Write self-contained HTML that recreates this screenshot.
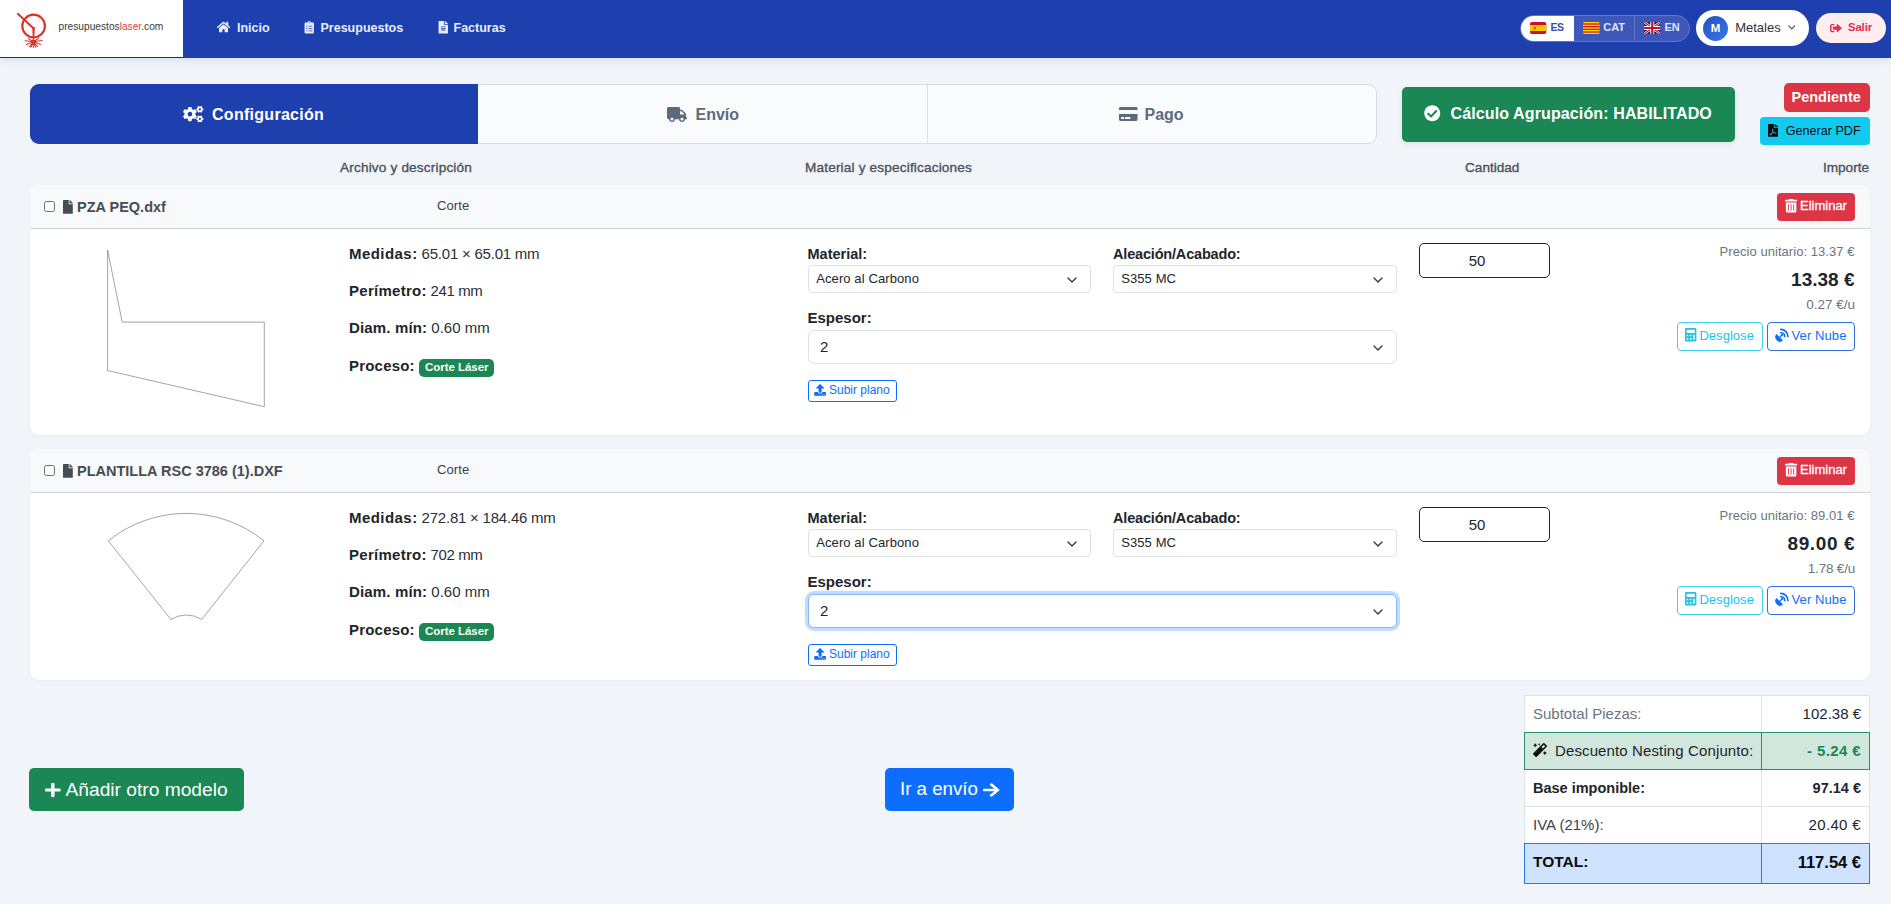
<!DOCTYPE html>
<html lang="es">
<head>
<meta charset="utf-8">
<title>Presupuestos Láser - Configuración</title>
<style>
*{box-sizing:border-box;margin:0;padding:0}
html,body{width:1891px;height:904px;overflow:hidden}
body{position:relative;background:#f1f5f9;font-family:"Liberation Sans",Arial,sans-serif;color:#212529;font-size:14px}
.a{position:absolute}
.t{position:absolute;white-space:nowrap;line-height:1}
.b{font-weight:700}
svg{position:absolute;display:block;overflow:visible}

/* header */
#hdr{left:0;top:0;width:1891px;height:57.500px;background:#1e40af;box-shadow:0 2px 8px rgba(30,64,175,.13)}
#logo{left:0;top:0;width:183px;height:57.5px;background:#fff;border-bottom:1px solid #1b2f78}
.nav{color:#e8edff;font-weight:700;font-size:12.5px;top:22px}

/* lang */
#lang{left:1520px;top:15px;width:169.500px;height:27px;border-radius:13.500px;background:#3e58ba;border:1px solid #5f76c8;overflow:hidden}
#lang .es{left:-1px;top:-1px;width:54px;height:27px;background:#fff;border-radius:13px 0 0 13px}
#lang .sep{left:113px;top:0;width:1px;height:24px;background:#5f76c8}
.lg{font-weight:700;font-size:11px;top:22px}

#user{left:1696px;top:10px;width:113px;height:35.500px;border-radius:18px;background:#fff}
#av{left:1703px;top:16px;width:25px;height:25px;border-radius:12.500px;background:linear-gradient(135deg,#2350c2,#3877ee)}
#salir{left:1816px;top:13px;width:70px;height:30px;border-radius:15px;background:#ffeef0}

/* tabs */
#tabs{left:30px;top:84px;width:1347px;height:60px;border-radius:9px;background:#fafbfd;border:1px solid #d8dde5;overflow:hidden}
#tab1{left:30px;top:84px;width:447.800px;height:60px;background:#1e40af;border-radius:9px 0 0 9px}
#tsep{left:896px;top:0;width:1px;height:58px;background:#dde2ea}
.tab{font-weight:700;font-size:16px;top:106.600px}

#grp{left:1402px;top:87px;width:333px;height:55px;border-radius:5px;background:#1a8754;box-shadow:0 2px 6px rgba(0,0,0,.08)}
#pend{left:1784px;top:83px;width:86px;height:28.700px;border-radius:5px;background:#dc3545}
#pdf{left:1760px;top:117px;width:110px;height:28px;border-radius:4px;background:#12caf0}

.col{font-size:13.600px;color:#4b5260;top:160.500px;font-weight:400;-webkit-text-stroke:.35px #4b5260}

/* cards */
.card{left:30px;width:1840px;background:#fff;border-radius:9px;overflow:hidden;box-shadow:0 1px 3px rgba(0,0,0,.04)}
.card .hd{left:0;top:0;width:1840px;height:44px;background:#f8f9fa;border-bottom:1px solid #cfd2d6}
.cb{left:14px;top:16px;width:11px;height:11px;border:1px solid #6d6d6d;border-radius:2.5px;background:#fff}
.fn{left:47px;top:14.500px;font-size:14.500px;font-weight:700;color:#474c52}
.corte{left:407px;top:14px;letter-spacing:.1px;font-size:13px;color:#3c4146}
.elim{left:1747px;top:8px;width:78px;height:28px;border-radius:4px;background:#dc3545}
.elim .t{left:23px;top:5.5px;font-size:13px;color:#fff;-webkit-text-stroke:.3px #fff}
.sp{font-size:15px;left:319px;color:#2b3035}
.sp b{color:#212529}
.bdg{display:inline-block;background:#1a8754;color:#fff;font-weight:700;font-size:11.500px;line-height:1;border-radius:5px;padding:3px 5.600px 3.500px;vertical-align:0px;margin-left:0.500px;letter-spacing:-.05px}
.lbl{font-size:14.5px;font-weight:700;color:#212529}
.sel{height:28px;border:1px solid #dee2e6;border-radius:4px;background:#fff}
.sel .t{left:7.2px;top:5.5px;font-size:13px;color:#212529;letter-spacing:.1px}
.sel svg{right:13px;top:10.500px}
.selL{height:34px;border:1px solid #dee2e6;border-radius:6px;background:#fff}
.selL .t{left:11px;top:8px;font-size:15px}
.selL svg{right:13px;top:13.500px}
.up{left:778px;width:89px;height:22px;border:1px solid #0d6efd;border-radius:3px;background:#fff}
.up .t{left:20px;top:3.2px;font-size:12px;color:#0d6efd}
.qty{left:1389px;width:131px;height:35px;border:1.5px solid #212529;border-radius:5px;background:#fff}
.qty .t{left:0;width:114px;text-align:center;top:9px;font-size:15px;color:#212529}
.pu{right:15.500px;font-size:13px;letter-spacing:.05px;color:#6c757d}
.pr{right:15.500px;font-size:19px;font-weight:700;color:#212529}
.pe{right:15px;font-size:13.500px;color:#6c757d}
.dsg{left:1647px;width:86px;height:29px;border:1px solid #3fd0ef;border-radius:4px;background:#fff}
.dsg .t{left:21.400px;top:6px;letter-spacing:.04px;font-size:13px;color:#1cc4ea}
.nub{left:1737px;width:88px;height:29px;border:1px solid #2f6fe0;border-radius:4px;background:#fff}
.nub .t{left:23.500px;top:6px;letter-spacing:.1px;font-size:13px;color:#0d6efd}

/* bottom */
#add{left:29px;top:768px;width:215px;height:43px;border-radius:5px;background:#1a8754}
#go{left:885px;top:768px;width:129px;height:43px;border-radius:5px;background:#0d6efd}
#tot{left:1524px;top:695px;width:346px;height:189px;background:#fff;border:1px solid #dee2e6}
.tr{left:-1px;width:346px;border-bottom:1px solid #dee2e6}
.tl{left:8px;font-size:15px}
.tv{right:8px;font-size:15px}
</style>
</head>
<body>

<!-- HEADER -->
<div class="a" id="hdr"></div>
<div class="a" id="logo"></div>


<!-- logo -->
<svg style="left:14px;top:8.5px" width="40" height="44" viewBox="14 8 40 44">
  <circle cx="33.6" cy="24.9" r="11.3" fill="none" stroke="#de3029" stroke-width="2.1"/>
  <path d="M17.8 12.8 L33.4 27.2" stroke="#de3029" stroke-width="1.9" fill="none" stroke-linecap="round"/>
  <path d="M32.3 26.4 L34.9 26 L34.2 38.8 L32.8 38.8 Z" fill="#de3029"/>
  <g stroke="#de3029" stroke-width="1.05" stroke-linecap="round">
    <path d="M33.4 40.8 L25 39.8 M33.4 40.8 L42.2 39.6 M33.4 40.8 L26.5 43.6 M33.4 40.8 L40.6 43.4 M33.4 40.8 L29.3 45.8 M33.4 40.8 L37.6 45.6 M33.4 40.8 L33.3 46.6 M33.4 40.8 L28.5 37.6 M33.4 40.8 L38.6 37.4 M33.4 40.8 L31 46.2 M33.4 40.8 L35.6 46.2"/>
  </g>
  <circle cx="33.4" cy="40.8" r="2.3" fill="#de3029"/>
</svg>
<div class="t" id="lgt" style="left:58.5px;top:22px;font-size:10.2px;color:#3a3a3a;letter-spacing:0px">presupuestos<span style="color:#e2423f">laser</span>.com</div>

<!-- nav -->
<svg style="left:216px;top:21px" width="15" height="12" viewBox="0 0 576 512"><path fill="#e8edff" d="M280.4 148.3 96 300.1V464a16 16 0 0 0 16 16l112.1-.3a16 16 0 0 0 15.900-16V368a16 16 0 0 1 16-16h64a16 16 0 0 1 16 16v95.600a16 16 0 0 0 16 16.100L464 480a16 16 0 0 0 16-16V300L295.700 148.300a12.200 12.200 0 0 0-15.300 0zM571.600 251.500 488 182.600V44.100a12 12 0 0 0-12-12h-56a12 12 0 0 0-12 12v72.600L318.500 43a48 48 0 0 0-61 0L4.300 251.500a12 12 0 0 0-1.600 16.900l25.500 31a12 12 0 0 0 16.900 1.600l235.200-193.700a12.200 12.200 0 0 1 15.300 0L530.900 301a12 12 0 0 0 16.900-1.600l25.500-31a12 12 0 0 0-1.700-16.900z"/></svg>
<div class="t nav" id="n1" style="left:237px">Inicio</div>
<svg style="left:304px;top:21px" width="10.500" height="12.500" viewBox="0 0 384 512"><path fill="#e8edff" d="M336 64h-80c0-35.300-28.700-64-64-64s-64 28.700-64 64H48C21.500 64 0 85.500 0 112v352c0 26.500 21.500 48 48 48h288c26.500 0 48-21.500 48-48V112c0-26.500-21.500-48-48-48zM96 424c-13.300 0-24-10.700-24-24s10.700-24 24-24 24 10.700 24 24-10.700 24-24 24zm0-96c-13.300 0-24-10.700-24-24s10.700-24 24-24 24 10.700 24 24-10.700 24-24 24zm0-96c-13.300 0-24-10.700-24-24s10.700-24 24-24 24 10.700 24 24-10.700 24-24 24zm96-192c13.300 0 24 10.700 24 24s-10.700 24-24 24-24-10.700-24-24 10.700-24 24-24zm128 368c0 4.400-3.600 8-8 8H168c-4.400 0-8-3.600-8-8v-16c0-4.400 3.600-8 8-8h144c4.400 0 8 3.600 8 8v16zm0-96c0 4.400-3.600 8-8 8H168c-4.400 0-8-3.600-8-8v-16c0-4.400 3.600-8 8-8h144c4.400 0 8 3.600 8 8v16zm0-96c0 4.400-3.600 8-8 8H168c-4.400 0-8-3.600-8-8v-16c0-4.400 3.600-8 8-8h144c4.400 0 8 3.600 8 8v16z"/></svg>
<div class="t nav" id="n2" style="left:320.500px">Presupuestos</div>
<svg style="left:437.500px;top:21px" width="10.500" height="12.500" viewBox="0 0 384 512"><path fill="#e8edff" d="M224 136V0H24C10.700 0 0 10.700 0 24v464c0 13.300 10.700 24 24 24h336c13.300 0 24-10.700 24-24V160H248c-13.200 0-24-10.800-24-24zm64 236c0 6.600-5.400 12-12 12H108c-6.600 0-12-5.400-12-12v-8c0-6.600 5.400-12 12-12h168c6.600 0 12 5.400 12 12v8zm0-64c0 6.600-5.400 12-12 12H108c-6.600 0-12-5.400-12-12v-8c0-6.600 5.400-12 12-12h168c6.600 0 12 5.400 12 12v8zm0-72v8c0 6.600-5.400 12-12 12H108c-6.600 0-12-5.400-12-12v-8c0-6.600 5.400-12 12-12h168c6.600 0 12 5.400 12 12zm96-114.100v6.100H256V0h6.100c6.400 0 12.500 2.500 17 7l97.900 98c4.500 4.500 7 10.600 7 16.900z"/></svg>
<div class="t nav" id="n3" style="left:453.500px">Facturas</div>


<div class="a" id="lang"><div class="a es"></div><div class="a sep"></div></div>
<!-- ES flag -->
<svg style="left:1529.700px;top:21.800px" width="16.300" height="12" viewBox="0 0 16.300 12"><rect width="16.300" height="12" rx="2" fill="#c8102e"/><rect y="3" width="16.300" height="6" fill="#ffc400"/><rect x="3.600" y="4.500" width="2.200" height="3" rx=".6" fill="#ad6b2a"/></svg>
<div class="t lg" id="l1" style="left:1550.500px;letter-spacing:-.5px;font-size:10.500px;color:#3550a5">ES</div>
<!-- CAT flag -->
<svg style="left:1582.600px;top:21.800px" width="16.500" height="12" viewBox="0 0 16.500 12"><rect width="16.500" height="12" rx="1.500" fill="#fcdd09"/><g fill="#da121a"><rect y="1.330" width="16.500" height="1.330"/><rect y="4" width="16.500" height="1.330"/><rect y="6.670" width="16.500" height="1.330"/><rect y="9.330" width="16.500" height="1.330"/></g></svg>
<div class="t lg" id="l2" style="left:1603.300px;color:#dfe6ff">CAT</div>
<!-- UK flag -->
<svg style="left:1643.700px;top:21.800px" width="16.500" height="12" viewBox="0 0 60 44"><clipPath id="ukc"><rect width="60" height="44" rx="5"/></clipPath><g clip-path="url(#ukc)"><rect width="60" height="44" fill="#012169"/><path d="M0 0 L60 44 M60 0 L0 44" stroke="#fff" stroke-width="9"/><path d="M0 0 L60 44 M60 0 L0 44" stroke="#c8102e" stroke-width="4"/><path d="M30 0 V44 M0 22 H60" stroke="#fff" stroke-width="15"/><path d="M30 0 V44 M0 22 H60" stroke="#c8102e" stroke-width="8"/></g></svg>
<div class="t lg" id="l3" style="left:1664.500px;color:#dfe6ff">EN</div>

<div class="a" id="user"></div>
<div class="a" id="av"></div>
<div class="t b" id="avm" style="left:1710.700px;top:22.500px;font-size:11.500px;color:#fff">M</div>
<div class="t" id="met" style="left:1735.200px;top:21px;font-size:13px;color:#2e3238">Metales</div>
<svg style="left:1788px;top:25.200px" width="7.500" height="5" viewBox="0 0 7.500 5"><path d="M.8 .9 L3.750 3.900 L6.700 .9" fill="none" stroke="#4a4f57" stroke-width="1.200" stroke-linecap="round" stroke-linejoin="round"/></svg>

<div class="a" id="salir"></div>
<svg style="left:1829.900px;top:24.300px" width="11.700" height="8.200" viewBox="0 64 504 384" preserveAspectRatio="none"><path fill="#dc2f55" d="M497 273L329 441c-15 15-41 4.500-41-17v-96H152c-13.300 0-24-10.700-24-24v-96c0-13.300 10.700-24 24-24h136V88c0-21.400 25.900-32 41-17l168 168c9.300 9.400 9.300 24.600 0 34zM192 436v-40c0-6.600-5.400-12-12-12H96c-17.700 0-32-14.300-32-32V160c0-17.700 14.300-32 32-32h84c6.600 0 12-5.400 12-12V76c0-6.600-5.400-12-12-12H96c-53 0-96 43-96 96v192c0 53 43 96 96 96h84c6.600 0 12-5.400 12-12z"/></svg>
<div class="t b" id="sal" style="left:1848px;top:22.200px;font-size:11.300px;letter-spacing:-.1px;color:#dc2f55">Salir</div>


<!-- TABS -->
<div class="a" id="tabs"><div class="a" id="tsep"></div></div>
<div class="a" id="tab1"></div>
<svg style="left:183.300px;top:106px" width="20.500" height="16.300" viewBox="0 0 640 512"><path fill="#fff" d="M512.100 191l-8.200 14.300c-3 5.300-9.400 7.500-15.100 5.400-11.800-4.400-22.600-10.700-32.100-18.600-4.600-3.800-5.800-10.500-2.800-15.700l8.200-14.300c-6.900-8-12.300-17.300-15.900-27.400h-16.500c-6 0-11.200-4.300-12.200-10.300-2-12-2.100-24.600 0-37.100 1-6 6.200-10.400 12.200-10.400h16.500c3.600-10.100 9-19.400 15.900-27.400l-8.200-14.300c-3-5.200-1.900-11.900 2.800-15.700 9.500-7.900 20.400-14.200 32.100-18.600 5.700-2.100 12.100.1 15.100 5.400l8.200 14.300c10.500-1.900 21.200-1.900 31.700 0L552 6.300c3-5.300 9.400-7.500 15.100-5.400 11.800 4.400 22.600 10.700 32.100 18.600 4.600 3.800 5.800 10.500 2.800 15.700l-8.200 14.300c6.900 8 12.300 17.300 15.900 27.400h16.500c6 0 11.200 4.300 12.200 10.300 2 12 2.100 24.600 0 37.100-1 6-6.200 10.400-12.200 10.400h-16.500c-3.600 10.100-9 19.400-15.900 27.400l8.200 14.300c3 5.200 1.900 11.900-2.800 15.700-9.500 7.900-20.400 14.200-32.100 18.600-5.700 2.100-12.100-.1-15.100-5.400l-8.200-14.300c-10.400 1.900-21.200 1.900-31.700 0zm-10.500-58.800c38.500 29.600 82.400-14.300 52.800-52.800-38.500-29.700-82.400 14.300-52.800 52.800zM386.300 286.100l33.700 16.800c10.100 5.800 14.500 18.100 10.500 29.100-8.900 24.200-26.400 46.400-42.600 65.800-7.400 8.900-20.200 11.100-30.300 5.300l-29.100-16.800c-16 13.700-34.600 24.600-54.900 31.700v33.600c0 11.600-8.300 21.600-19.700 23.600-24.600 4.200-50.400 4.400-75.900 0-11.500-2-20-11.900-20-23.600V418c-20.300-7.200-38.900-18-54.900-31.700L74 403c-10 5.800-22.900 3.600-30.300-5.300-16.200-19.400-33.300-41.600-42.200-65.700-4-10.900.4-23.200 10.500-29.100l33.300-16.800c-3.900-20.900-3.900-42.400 0-63.400L12 205.800c-10.100-5.800-14.600-18.100-10.500-29 8.900-24.200 26-46.400 42.200-65.800 7.400-8.900 20.200-11.100 30.300-5.300l29.100 16.800c16-13.700 34.600-24.600 54.900-31.700V57.100c0-11.500 8.200-21.500 19.600-23.500 24.600-4.200 50.500-4.400 76-.1 11.500 2 20 11.900 20 23.600v33.600c20.300 7.200 38.900 18 54.900 31.700l29.100-16.800c10-5.800 22.900-3.600 30.300 5.300 16.200 19.400 33.200 41.600 42.100 65.800 4 10.900.1 23.200-10 29.100l-33.700 16.800c3.900 21 3.900 42.500 0 63.500zm-117.600 21.100c59.200-77-28.700-164.900-105.700-105.700-59.200 77 28.700 164.900 105.700 105.700zm243.400 182.700l-8.200 14.300c-3 5.300-9.400 7.500-15.100 5.400-11.800-4.400-22.600-10.700-32.100-18.600-4.600-3.800-5.800-10.500-2.800-15.700l8.200-14.300c-6.900-8-12.300-17.300-15.900-27.400h-16.500c-6 0-11.200-4.300-12.200-10.300-2-12-2.100-24.600 0-37.100 1-6 6.200-10.400 12.200-10.400h16.500c3.600-10.100 9-19.400 15.900-27.400l-8.200-14.300c-3-5.200-1.900-11.900 2.800-15.700 9.500-7.900 20.400-14.200 32.100-18.600 5.700-2.100 12.100.1 15.100 5.400l8.200 14.300c10.500-1.900 21.200-1.900 31.700 0l8.200-14.300c3-5.300 9.400-7.500 15.100-5.400 11.800 4.400 22.600 10.700 32.100 18.600 4.600 3.800 5.800 10.500 2.800 15.700l-8.200 14.300c6.900 8 12.300 17.300 15.900 27.400h16.500c6 0 11.200 4.300 12.200 10.300 2 12 2.100 24.600 0 37.100-1 6-6.200 10.400-12.200 10.400h-16.500c-3.600 10.100-9 19.400-15.900 27.400l8.200 14.300c3 5.200 1.900 11.900-2.800 15.700-9.500 7.900-20.400 14.200-32.100 18.600-5.700 2.100-12.100-.1-15.100-5.400l-8.200-14.300c-10.400 1.900-21.200 1.900-31.700 0zM501.600 431c38.500 29.600 82.400-14.300 52.800-52.800-38.500-29.600-82.400 14.300-52.800 52.800z"/></svg>
<div class="t tab" id="t1" style="left:212px;letter-spacing:.28px;color:#fff">Configuración</div>
<svg style="left:667px;top:106.500px" width="20" height="15" viewBox="0 0 640 512" preserveAspectRatio="none"><path fill="#5d6a7c" d="M624 352h-16V243.900c0-12.700-5.100-24.900-14.100-33.900L494 110.100c-9-9-21.200-14.100-33.900-14.100H416V48c0-26.500-21.500-48-48-48H48C21.500 0 0 21.500 0 48v320c0 26.500 21.500 48 48 48h16c0 53 43 96 96 96s96-43 96-96h128c0 53 43 96 96 96s96-43 96-96h48c8.800 0 16-7.200 16-16v-32c0-8.800-7.200-16-16-16zM160 464c-26.500 0-48-21.500-48-48s21.500-48 48-48 48 21.500 48 48-21.500 48-48 48zm320 0c-26.500 0-48-21.500-48-48s21.500-48 48-48 48 21.500 48 48-21.500 48-48 48zm80-208H416V144h44.100l99.900 99.900V256z"/></svg>
<div class="t tab" id="t2" style="left:695.500px;color:#5d6a7c">Envío</div>
<svg style="left:1118.500px;top:107px" width="18.500" height="14" viewBox="0 0 576 448" preserveAspectRatio="none"><path fill="#5d6a7c" d="M0 400c0 26.500 21.500 48 48 48h480c26.500 0 48-21.500 48-48V224H0v176zm192-68c0-6.600 5.400-12 12-12h136c6.600 0 12 5.400 12 12v40c0 6.600-5.400 12-12 12H204c-6.600 0-12-5.400-12-12v-40zm-128 0c0-6.600 5.400-12 12-12h72c6.600 0 12 5.400 12 12v40c0 6.600-5.400 12-12 12H76c-6.600 0-12-5.400-12-12v-40zM576 48v48H0V48C0 21.500 21.500 0 48 0h480c26.500 0 48 21.500 48 48z"/></svg>
<div class="t tab" id="t3" style="left:1144.500px;color:#5d6a7c">Pago</div>

<div class="a" id="grp"></div>
<svg style="left:1424.300px;top:105.300px" width="16.500" height="16.500" viewBox="0 0 512 512"><path fill="#fff" d="M504 256c0 137-111 248-248 248S8 393 8 256 119 8 256 8s248 111 248 248zM227.300 387.300l184-184c6.200-6.200 6.200-16.400 0-22.600l-22.600-22.600c-6.200-6.200-16.400-6.200-22.600 0L216 308.100l-70.100-70.100c-6.200-6.200-16.400-6.200-22.600 0l-22.600 22.600c-6.200 6.200-6.200 16.400 0 22.600l104 104c6.200 6.300 16.400 6.300 22.600.1z"/></svg>
<div class="t b" id="grt" style="left:1450.500px;top:106px;font-size:16px;letter-spacing:.12px;color:#fff">Cálculo Agrupación: HABILITADO</div>

<div class="a" id="pend"></div>
<div class="t b" id="pet" style="left:1791.500px;top:90px;font-size:14.500px;color:#fff">Pendiente</div>
<div class="a" id="pdf"></div>
<svg style="left:1768.300px;top:124.400px" width="10" height="12.800" viewBox="0 0 384 512" preserveAspectRatio="none"><path fill="#0a0a0a" d="M181.900 256.100c-5-16-4.900-46.900-2-46.900 8.400 0 7.600 36.900 2 46.900zm-1.700 47.200c-7.700 20.200-17.300 43.300-28.400 62.700 18.300-7 39-17.200 62.900-21.900-12.700-9.600-24.900-23.400-34.500-40.800zM86.100 428.100c0 .8 13.200-5.400 34.900-40.200-6.700 6.300-29.100 24.500-34.900 40.200zM248 160h136v328c0 13.300-10.700 24-24 24H24c-13.300 0-24-10.700-24-24V24C0 10.700 10.700 0 24 0h200v136c0 13.200 10.800 24 24 24zm-8 171.800c-20-12.200-33.300-29-42.700-53.800 4.500-18.500 11.600-46.600 6.200-64.200-4.700-29.400-42.400-26.500-47.800-6.800-5 18.300-.4 44.100 8.100 77-11.600 27.600-28.700 64.600-40.800 85.800-.1 0-.1.100-.2.100-27.100 13.900-73.600 44.500-54.500 68 5.600 6.900 16 10 21.500 10 17.900 0 35.700-18 61.100-61.800 25.800-8.500 54.100-19.100 79-23.200 21.700 11.800 47.100 19.500 64 19.500 29.200 0 31.200-32 19.700-43.400-13.900-13.600-54.300-9.700-73.600-7.200zM377 105L279 7c-4.500-4.500-10.600-7-17-7h-6v128h128v-6.100c0-6.300-2.500-12.400-7-16.900zm-74.100 255.300c4.100-2.700-2.500-11.900-42.800-9 37.100 15.800 42.800 9 42.800 9z"/></svg>
<div class="t" id="pdt" style="left:1785.700px;top:124.500px;font-size:12.600px;color:#0a0a0a">Generar PDF</div>

<div class="t col" id="c1" style="left:340px;letter-spacing:.17px">Archivo y descripción</div>
<div class="t col" id="c2" style="left:805px;letter-spacing:.17px">Material y especificaciones</div>
<div class="t col" id="c3" style="left:1465px">Cantidad</div>
<div class="t col" id="c4" style="right:22px">Importe</div>

<!-- CARDS -->
<div class="a card" id="card1" style="top:185px;height:249.5px">
  <div class="a hd"></div>
  <div class="a cb"></div>
  <svg style="left:33.300px;top:15.200px" width="9.800" height="13.800" viewBox="0 0 384 512" preserveAspectRatio="none"><path fill="#474c52" d="M224 136V0H24C10.700 0 0 10.700 0 24v464c0 13.300 10.700 24 24 24h336c13.300 0 24-10.700 24-24V160H248c-13.200 0-24-10.800-24-24zm160-14.100v6.100H256V0h6.100c6.400 0 12.500 2.500 17 7l97.900 98c4.500 4.500 7 10.600 7 16.900z"/></svg>
  <div class="t fn" id="fn1">PZA PEQ.dxf</div>
  <div class="t corte" id="co1">Corte</div>
  <div class="a elim"><svg style="left:8.300px;top:6px" width="12.200" height="13.500" viewBox="0 0 448 512" preserveAspectRatio="none"><path fill="#fff" d="M32 464a48 48 0 0 0 48 48h288a48 48 0 0 0 48-48V128H32zm272-256a16 16 0 0 1 32 0v224a16 16 0 0 1-32 0zm-96 0a16 16 0 0 1 32 0v224a16 16 0 0 1-32 0zm-96 0a16 16 0 0 1 32 0v224a16 16 0 0 1-32 0zM432 32H312l-9.400-18.700A24 24 0 0 0 281.100 0H166.800a23.700 23.700 0 0 0-21.400 13.300L136 32H16A16 16 0 0 0 0 48v32a16 16 0 0 0 16 16h416a16 16 0 0 0 16-16V48a16 16 0 0 0-16-16z"/></svg><div class="t" id="el1">Eliminar</div></div>
  <svg style="left:70px;top:60px" width="170" height="170" viewBox="100 245 170 170"><path d="M107.600 250 L122.200 322.100 L264.300 322.100 L264.300 406.700 L107.600 370.500 Z" fill="none" stroke="#7d7d7d" stroke-width=".7"/></svg>
  <div class="t sp" id="m1" style="top:61px"><b style="letter-spacing:.45px">Medidas:</b><span style="letter-spacing:-.22px"> 65.01 × 65.01 mm</span></div>
  <div class="t sp" id="p1" style="top:98.200px"><b style="letter-spacing:.28px">Perímetro:</b><span style="letter-spacing:-.4px"> 241 mm</span></div>
  <div class="t sp" id="d1" style="top:135.400px"><b style="letter-spacing:.15px">Diam. mín:</b><span style="letter-spacing:0px"> 0.60 mm</span></div>
  <div class="t sp" id="pc1" style="top:172.600px"><b style="letter-spacing:.2px">Proceso:</b> <span class="bdg">Corte Láser</span></div>

  <div class="t lbl" id="lm1" style="left:777.500px;top:62px">Material:</div>
  <div class="a sel" style="left:778px;top:80px;width:282.500px"><div class="t" id="s11">Acero al Carbono</div><svg width="10" height="6" viewBox="0 0 10 6"><path d="M1 1 L5 5 L9 1" fill="none" stroke="#343a40" stroke-width="1.400" stroke-linecap="round" stroke-linejoin="round"/></svg></div>
  <div class="t lbl" id="la1" style="left:1083px;top:62px;letter-spacing:-.18px">Aleación/Acabado:</div>
  <div class="a sel" style="left:1083px;top:80px;width:283.500px"><div class="t" id="s21">S355 MC</div><svg width="10" height="6" viewBox="0 0 10 6"><path d="M1 1 L5 5 L9 1" fill="none" stroke="#343a40" stroke-width="1.400" stroke-linecap="round" stroke-linejoin="round"/></svg></div>
  <div class="t lbl" id="le1" style="left:777.500px;top:124.500px;font-size:15px">Espesor:</div>
  <div class="a selL" style="left:778px;top:145px;width:588.500px"><div class="t">2</div><svg width="10" height="6" viewBox="0 0 10 6"><path d="M1 1 L5 5 L9 1" fill="none" stroke="#343a40" stroke-width="1.400" stroke-linecap="round" stroke-linejoin="round"/></svg></div>
  <div class="a up" style="top:195px"><svg style="left:4.800px;top:2.700px" width="12.200" height="11.800" viewBox="0 0 512 512"><path fill="#0d6efd" d="M296 384h-80c-13.300 0-24-10.700-24-24V192h-87.700c-17.800 0-26.700-21.500-14.100-34.100L242.300 5.700c7.500-7.500 19.800-7.500 27.300 0l152.200 152.200c12.600 12.600 3.700 34.100-14.100 34.100H320v168c0 13.300-10.700 24-24 24zm216-8v112c0 13.300-10.700 24-24 24H24c-13.300 0-24-10.700-24-24V376c0-13.300 10.700-24 24-24h136v8c0 30.900 25.100 56 56 56h80c30.900 0 56-25.100 56-56v-8h136c13.300 0 24 10.700 24 24zm-124 88c0-11-9-20-20-20s-20 9-20 20 9 20 20 20 20-9 20-20zm64 0c0-11-9-20-20-20s-20 9-20 20 9 20 20 20 20-9 20-20z"/></svg><div class="t" id="up1">Subir plano</div></div>

  <div class="a qty" style="top:58px"><div class="t">50</div></div>
  <div class="t pu" id="pu1" style="top:59.500px">Precio unitario: 13.37 €</div>
  <div class="t pr" id="pr1" style="top:85px">13.38 €</div>
  <div class="t pe" id="pe1" style="top:113px">0.27 €/u</div>
  <div class="a dsg" style="top:137px"><svg style="left:6.600px;top:5.300px" width="11.400" height="13.400" viewBox="0 0 448 512" preserveAspectRatio="none"><path fill="#1cc4ea" d="M400 0H48C22.400 0 0 22.400 0 48v416c0 25.600 22.400 48 48 48h352c25.600 0 48-22.400 48-48V48c0-25.600-22.400-48-48-48zM128 435.200c0 6.400-6.400 12.800-12.800 12.800H76.800c-6.400 0-12.800-6.400-12.800-12.800v-38.400c0-6.400 6.400-12.800 12.800-12.800h38.400c6.400 0 12.800 6.400 12.800 12.800v38.400zm0-128c0 6.400-6.400 12.800-12.800 12.800H76.800c-6.400 0-12.800-6.400-12.800-12.800v-38.400c0-6.400 6.400-12.800 12.800-12.800h38.400c6.400 0 12.800 6.400 12.800 12.800v38.400zm128 128c0 6.400-6.400 12.800-12.800 12.800h-38.400c-6.400 0-12.800-6.400-12.800-12.800v-38.400c0-6.400 6.400-12.800 12.800-12.800h38.400c6.400 0 12.800 6.400 12.800 12.800v38.400zm0-128c0 6.400-6.400 12.800-12.800 12.800h-38.400c-6.400 0-12.800-6.400-12.800-12.800v-38.400c0-6.400 6.400-12.800 12.800-12.800h38.400c6.400 0 12.800 6.400 12.800 12.800v38.400zm128 128c0 6.400-6.400 12.800-12.800 12.800h-38.400c-6.400 0-12.800-6.400-12.800-12.800V268.800c0-6.400 6.400-12.800 12.800-12.800h38.400c6.400 0 12.800 6.400 12.800 12.800v166.400zm0-256c0 6.400-6.400 12.800-12.800 12.800H76.800c-6.400 0-12.800-6.400-12.800-12.800V76.800C64 70.400 70.400 64 76.800 64h294.400c6.400 0 12.800 6.400 12.800 12.800v102.400z"/></svg><div class="t" id="dg1">Desglose</div></div>
  <div class="a nub" style="top:137px"><svg style="left:6.500px;top:4.700px" width="14" height="14" viewBox="0 0 14 14"><path d="M1.550 5.950 A4.600 4.600 0 0 0 8.050 12.450 Z" fill="#0d6efd"/><path d="M4.800 9.200 L7 7" stroke="#0d6efd" stroke-width="1.300" stroke-linecap="round"/><circle cx="7.200" cy="6.800" r="1.100" fill="#0d6efd"/><path d="M5.800 1.300 A7.200 7.200 0 0 1 12.900 8.400 M5.800 4.500 A4 4 0 0 1 9.700 8.400" fill="none" stroke="#0d6efd" stroke-width="1.700" stroke-linecap="round"/></svg><div class="t" id="nb1">Ver Nube</div></div>
</div>

<div class="a card" id="card2" style="top:449px;height:230.5px">
  <div class="a hd"></div>
  <div class="a cb"></div>
  <svg style="left:33.300px;top:15.200px" width="9.800" height="13.800" viewBox="0 0 384 512" preserveAspectRatio="none"><path fill="#474c52" d="M224 136V0H24C10.700 0 0 10.700 0 24v464c0 13.300 10.700 24 24 24h336c13.300 0 24-10.700 24-24V160H248c-13.200 0-24-10.800-24-24zm160-14.100v6.100H256V0h6.100c6.400 0 12.500 2.500 17 7l97.900 98c4.500 4.500 7 10.600 7 16.900z"/></svg>
  <div class="t fn" id="fn2">PLANTILLA RSC 3786 (1).DXF</div>
  <div class="t corte" id="co2">Corte</div>
  <div class="a elim"><svg style="left:8.300px;top:6px" width="12.200" height="13.500" viewBox="0 0 448 512" preserveAspectRatio="none"><path fill="#fff" d="M32 464a48 48 0 0 0 48 48h288a48 48 0 0 0 48-48V128H32zm272-256a16 16 0 0 1 32 0v224a16 16 0 0 1-32 0zm-96 0a16 16 0 0 1 32 0v224a16 16 0 0 1-32 0zm-96 0a16 16 0 0 1 32 0v224a16 16 0 0 1-32 0zM432 32H312l-9.400-18.700A24 24 0 0 0 281.100 0H166.800a23.700 23.700 0 0 0-21.400 13.300L136 32H16A16 16 0 0 0 0 48v32a16 16 0 0 0 16 16h416a16 16 0 0 0 16-16V48a16 16 0 0 0-16-16z"/></svg><div class="t" id="el2">Eliminar</div></div>
  <svg style="left:70px;top:56px" width="170" height="125" viewBox="100 505 170 125"><path d="M108.300 540.800 A124.300 124.300 0 0 1 264 540.800 L201.700 619.400 A29.200 29.200 0 0 0 170.900 619.400 Z" fill="none" stroke="#7d7d7d" stroke-width=".7"/></svg>
  <div class="t sp" id="m2" style="top:61px"><b style="letter-spacing:.45px">Medidas:</b><span style="letter-spacing:-.22px"> 272.81 × 184.46 mm</span></div>
  <div class="t sp" id="p2" style="top:98.200px"><b style="letter-spacing:.28px">Perímetro:</b><span style="letter-spacing:-.4px"> 702 mm</span></div>
  <div class="t sp" id="d2" style="top:135.400px"><b style="letter-spacing:.15px">Diam. mín:</b><span style="letter-spacing:0px"> 0.60 mm</span></div>
  <div class="t sp" id="pc2" style="top:172.600px"><b style="letter-spacing:.2px">Proceso:</b> <span class="bdg">Corte Láser</span></div>

  <div class="t lbl" id="lm2" style="left:777.500px;top:62px">Material:</div>
  <div class="a sel" style="left:778px;top:80px;width:282.500px"><div class="t" id="s12">Acero al Carbono</div><svg width="10" height="6" viewBox="0 0 10 6"><path d="M1 1 L5 5 L9 1" fill="none" stroke="#343a40" stroke-width="1.400" stroke-linecap="round" stroke-linejoin="round"/></svg></div>
  <div class="t lbl" id="la2" style="left:1083px;top:62px;letter-spacing:-.18px">Aleación/Acabado:</div>
  <div class="a sel" style="left:1083px;top:80px;width:283.500px"><div class="t" id="s22">S355 MC</div><svg width="10" height="6" viewBox="0 0 10 6"><path d="M1 1 L5 5 L9 1" fill="none" stroke="#343a40" stroke-width="1.400" stroke-linecap="round" stroke-linejoin="round"/></svg></div>
  <div class="t lbl" id="le2" style="left:777.500px;top:124.500px;font-size:15px">Espesor:</div>
  <div class="a selL" style="left:778px;top:145px;width:588.500px;border-color:#86b7fe;box-shadow:0 0 0 3px rgba(13,110,253,.25)"><div class="t">2</div><svg width="10" height="6" viewBox="0 0 10 6"><path d="M1 1 L5 5 L9 1" fill="none" stroke="#343a40" stroke-width="1.400" stroke-linecap="round" stroke-linejoin="round"/></svg></div>
  <div class="a up" style="top:195px"><svg style="left:4.800px;top:2.700px" width="12.200" height="11.800" viewBox="0 0 512 512"><path fill="#0d6efd" d="M296 384h-80c-13.300 0-24-10.700-24-24V192h-87.700c-17.800 0-26.700-21.500-14.100-34.100L242.300 5.700c7.500-7.500 19.800-7.500 27.300 0l152.200 152.200c12.600 12.600 3.700 34.100-14.100 34.100H320v168c0 13.300-10.700 24-24 24zm216-8v112c0 13.300-10.700 24-24 24H24c-13.300 0-24-10.700-24-24V376c0-13.300 10.700-24 24-24h136v8c0 30.900 25.100 56 56 56h80c30.900 0 56-25.100 56-56v-8h136c13.300 0 24 10.700 24 24zm-124 88c0-11-9-20-20-20s-20 9-20 20 9 20 20 20 20-9 20-20zm64 0c0-11-9-20-20-20s-20 9-20 20 9 20 20 20 20-9 20-20z"/></svg><div class="t" id="up2">Subir plano</div></div>

  <div class="a qty" style="top:58px"><div class="t">50</div></div>
  <div class="t pu" id="pu2" style="top:59.500px">Precio unitario: 89.01 €</div>
  <div class="t pr" id="pr2" style="top:85px;letter-spacing:.6px;right:14.900px">89.00 €</div>
  <div class="t pe" id="pe2" style="top:113px;letter-spacing:-.2px">1.78 €/u</div>
  <div class="a dsg" style="top:137px"><svg style="left:6.600px;top:5.300px" width="11.400" height="13.400" viewBox="0 0 448 512" preserveAspectRatio="none"><path fill="#1cc4ea" d="M400 0H48C22.400 0 0 22.400 0 48v416c0 25.600 22.400 48 48 48h352c25.600 0 48-22.400 48-48V48c0-25.600-22.400-48-48-48zM128 435.200c0 6.400-6.400 12.800-12.800 12.800H76.800c-6.400 0-12.800-6.400-12.800-12.800v-38.400c0-6.400 6.400-12.800 12.800-12.800h38.400c6.400 0 12.800 6.400 12.800 12.800v38.400zm0-128c0 6.400-6.400 12.800-12.800 12.800H76.800c-6.400 0-12.800-6.400-12.800-12.800v-38.400c0-6.400 6.400-12.800 12.800-12.800h38.400c6.400 0 12.800 6.400 12.800 12.800v38.400zm128 128c0 6.400-6.400 12.800-12.800 12.800h-38.400c-6.400 0-12.800-6.400-12.800-12.800v-38.400c0-6.400 6.400-12.800 12.800-12.800h38.400c6.400 0 12.800 6.400 12.800 12.800v38.400zm0-128c0 6.400-6.400 12.800-12.800 12.800h-38.400c-6.400 0-12.800-6.400-12.800-12.800v-38.400c0-6.400 6.400-12.800 12.800-12.800h38.400c6.400 0 12.800 6.400 12.800 12.800v38.400zm128 128c0 6.400-6.400 12.800-12.800 12.800h-38.400c-6.400 0-12.800-6.400-12.800-12.800V268.800c0-6.400 6.400-12.800 12.800-12.800h38.400c6.400 0 12.800 6.400 12.800 12.800v166.400zm0-256c0 6.400-6.400 12.800-12.800 12.800H76.800c-6.400 0-12.800-6.400-12.800-12.800V76.800C64 70.400 70.400 64 76.800 64h294.400c6.400 0 12.800 6.400 12.800 12.800v102.400z"/></svg><div class="t" id="dg2">Desglose</div></div>
  <div class="a nub" style="top:137px"><svg style="left:6.500px;top:4.700px" width="14" height="14" viewBox="0 0 14 14"><path d="M1.550 5.950 A4.600 4.600 0 0 0 8.050 12.450 Z" fill="#0d6efd"/><path d="M4.800 9.200 L7 7" stroke="#0d6efd" stroke-width="1.300" stroke-linecap="round"/><circle cx="7.200" cy="6.800" r="1.100" fill="#0d6efd"/><path d="M5.800 1.300 A7.200 7.200 0 0 1 12.900 8.400 M5.800 4.500 A4 4 0 0 1 9.700 8.400" fill="none" stroke="#0d6efd" stroke-width="1.700" stroke-linecap="round"/></svg><div class="t" id="nb2">Ver Nube</div></div>
</div>


<!-- BOTTOM -->
<div class="a" id="add"></div>
<svg style="left:44.800px;top:781.500px" width="15.700" height="16" viewBox="0 0 448 512" preserveAspectRatio="none"><path fill="#fff" d="M416 208H272V64c0-17.670-14.330-32-32-32h-32c-17.670 0-32 14.330-32 32v144H32c-17.670 0-32 14.330-32 32v32c0 17.670 14.330 32 32 32h144v144c0 17.670 14.330 32 32 32h32c17.670 0 32-14.330 32-32V304h144c17.670 0 32-14.330 32-32v-32c0-17.670-14.330-32-32-32z"/></svg>
<div class="t" id="adt" style="left:65.500px;top:779.500px;font-size:19.200px;color:#fff">Añadir otro modelo</div>
<div class="a" id="go"></div>
<div class="t" id="got" style="left:900px;top:779.500px;font-size:18.700px;color:#fff">Ir a envío</div>
<svg style="left:983px;top:781.500px" width="16.500" height="16" viewBox="0 0 448 512" preserveAspectRatio="none"><path fill="#fff" d="M190.500 66.900l22.200-22.200c9.400-9.400 24.600-9.400 33.900 0L441 239c9.400 9.400 9.400 24.600 0 33.900L246.600 467.300c-9.400 9.400-24.600 9.400-33.900 0l-22.200-22.200c-9.500-9.500-9.300-25 .4-34.300L311.400 296H24c-13.300 0-24-10.700-24-24v-32c0-13.300 10.700-24 24-24h287.400L190.900 101.200c-9.800-9.300-10-24.800-.4-34.300z"/></svg>

<div class="a" id="tot">
  <div class="a" style="left:236px;top:0;width:1px;height:187px;background:#dee2e6"></div>
  <div class="a" style="left:0;top:36px;width:344px;height:1px;background:#dee2e6"></div>
  <div class="a" style="left:0;top:110px;width:344px;height:1px;background:#dee2e6"></div>
  <div class="a" style="left:-1px;top:36px;width:346px;height:38px;background:#d1e7dd;border:1px solid #2a9063"></div>
  <div class="a" style="left:236px;top:37px;width:1px;height:36px;background:#2a9063"></div>
  <div class="a" style="left:-1px;top:147px;width:346px;height:41px;background:#cfe2ff;border:1px solid #2b77dd"></div>
  <div class="a" style="left:236px;top:148px;width:1px;height:39px;background:#2b77dd"></div>

  <div class="t tl" id="r1l" style="top:10px;color:#6c757d">Subtotal Piezas:</div>
  <div class="t tv" id="r1v" style="top:10px">102.38 €</div>
  <svg style="left:7.500px;top:46.500px" width="14" height="14" viewBox="0 0 512 512"><path fill="#111" d="M224 96l16-32 32-16-32-16-16-32-16 32-32 16 32 16 16 32zM80 160l26.660-53.330L160 80l-53.340-26.670L80 0 53.340 53.330 0 80l53.340 26.670L80 160zm352 128l-26.660 53.330L352 368l53.340 26.670L432 448l26.660-53.330L512 368l-53.340-26.670L432 288zm70.620-193.770L417.770 9.380C411.530 3.120 403.340 0 395.150 0c-8.190 0-16.380 3.120-22.630 9.380L9.380 372.520c-12.500 12.500-12.500 32.760 0 45.250l84.850 84.850c6.250 6.250 14.440 9.370 22.620 9.370 8.190 0 16.380-3.120 22.630-9.370l363.140-363.150c12.500-12.480 12.500-32.750 0-45.240zM359.450 203.460l-50.910-50.910 86.600-86.600 50.910 50.910-86.600 86.600z"/></svg>
  <div class="t tl" id="r2l" style="left:30px;top:47px;letter-spacing:.12px">Descuento Nesting Conjunto:</div>
  <div class="t tv b" id="r2v" style="top:47px;color:#1a8754;letter-spacing:.4px">- 5.24 €</div>
  <div class="t tl b" id="r3l" style="top:84.500px;font-size:14.500px">Base imponible:</div>
  <div class="t tv b" id="r3v" style="top:84.500px;font-size:14.500px">97.14 €</div>
  <div class="t tl" id="r4l" style="top:121px;color:#3d4247">IVA (21%):</div>
  <div class="t tv" id="r4v" style="top:121px;letter-spacing:.35px">20.40 €</div>
  <div class="t tl b" id="r5l" style="top:158px;font-size:15.500px;color:#0a0a0a">TOTAL:</div>
  <div class="t tv b" id="r5v" style="top:158px;font-size:16.500px;color:#0a0a0a">117.54 €</div>
</div>


</body>
</html>
